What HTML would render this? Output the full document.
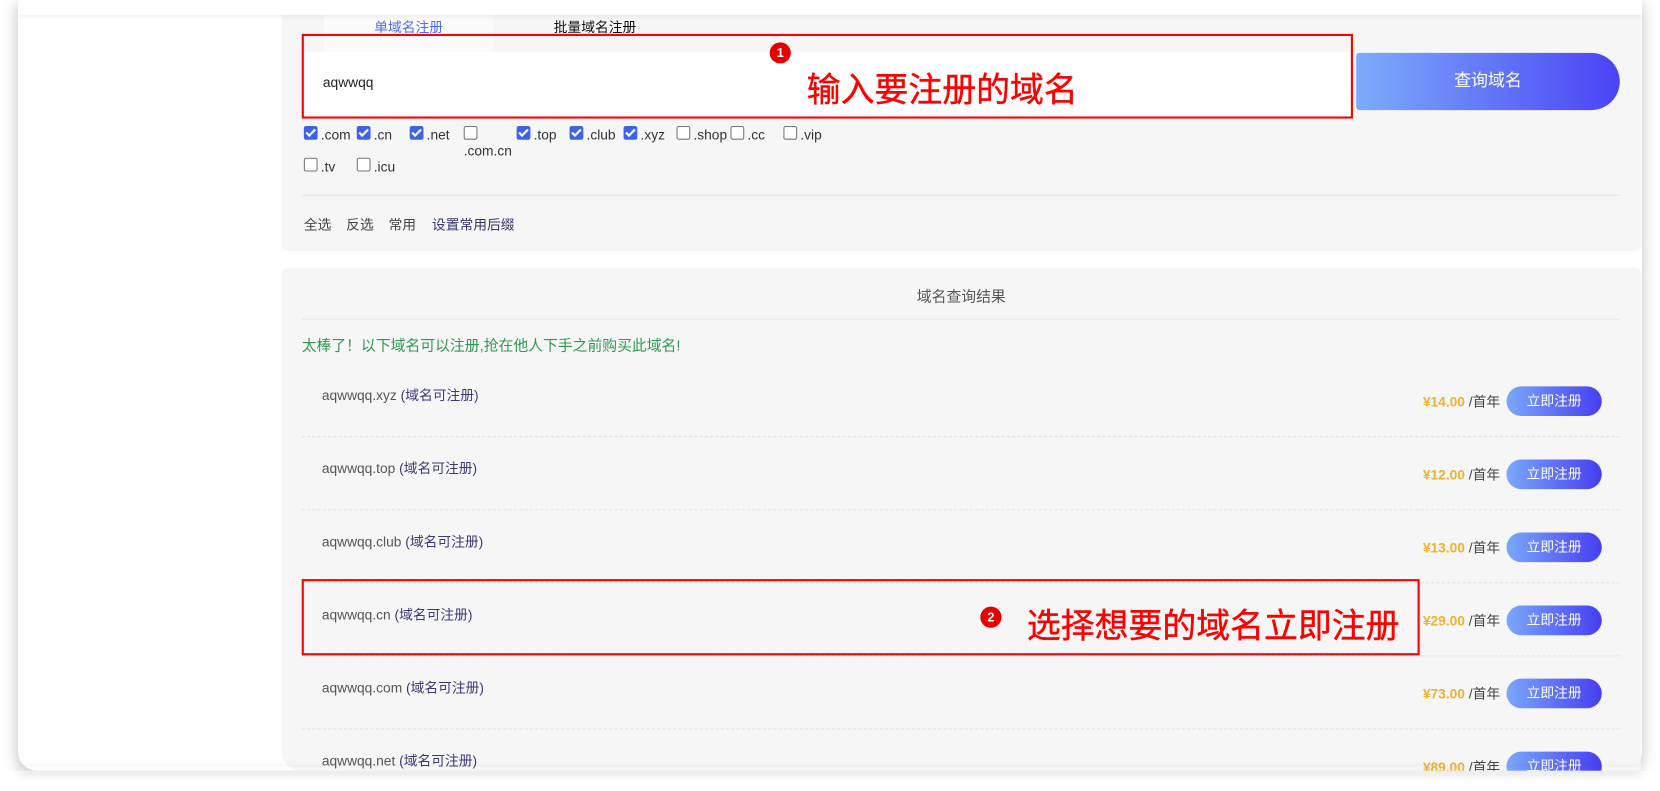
<!DOCTYPE html>
<html><head><meta charset="utf-8"><style>
html,body{margin:0;padding:0;width:1660px;height:791px;overflow:hidden;background:#fff;}
#s{position:absolute;left:0;top:0;width:1568px;height:747px;transform:scale(1.05867);transform-origin:0 0;font-family:"Liberation Sans","Noto Sans CJK SC",sans-serif;}
.a{position:absolute;white-space:nowrap;}
#win{position:absolute;left:17px;top:0;width:1534px;height:728px;background:#fff;border-radius:0 0 18px 18px;box-shadow:0 4px 14px rgba(0,0,0,.25);overflow:hidden;}
#topbar{position:absolute;left:0;top:0;width:1534px;height:14px;background:#fff;box-shadow:0 2px 4px rgba(0,0,0,.06);z-index:3;}
.p{position:absolute;background:#f6f6f6;}
.cb{position:absolute;width:11px;height:11px;border:1px solid #777;border-radius:2px;background:#fff;top:-1px;}
.cb.c{background:#3d63e8;border-color:#3d63e8;}
.cb.c:after{content:"";position:absolute;left:3px;top:0px;width:3px;height:7px;border:solid #fff;border-width:0 2px 2px 0;transform:rotate(45deg);}
.ck{position:absolute;font-size:13px;color:#333;top:120px;}
.ck span{margin-left:16px;}
.btn{position:absolute;left:1423px;width:90px;height:28px;border-radius:14px;background:linear-gradient(90deg,#7aa7fb,#463ef0);color:#fff;font-size:13px;text-align:center;line-height:28px;}
.dom{position:absolute;left:304px;font-size:13px;color:#555;}
.dom b{font-weight:normal;color:#3a3a78;}
.pr{position:absolute;right:calc(1568px - 1417px);font-size:13px;color:#444;}
.pr i{font-style:normal;color:#f0b030;font-weight:bold;}
.hr{position:absolute;left:285px;width:1245px;border-top:1px dashed #e2e2e2;}
.circ{position:absolute;width:20px;height:20px;border-radius:50%;background:#e60000;color:#fff;font-size:12px;font-weight:bold;text-align:center;line-height:20px;}
</style></head><body><div id="s">
<div id="win"><div id="topbar"></div></div>
<div class="p" style="left:266px;top:14px;width:1284px;height:223px;border-radius:0 0 6px 6px;"></div>
<div class="p" style="left:266px;top:253px;width:1284px;height:475px;border-radius:6px 6px 0 18px;"></div>
<div class="a" style="left:306px;top:14px;width:160px;height:35px;background:#fbfbfb;"></div>
<div class="a" style="left:306px;top:15px;width:160px;text-align:center;font-size:13px;color:#4e6ef2;">单域名注册</div>
<div class="a" style="left:482px;top:15px;width:160px;text-align:center;font-size:13px;color:#111;">批量域名注册</div>
<div class="a" style="left:287px;top:49px;width:989px;height:61px;background:#fff;"></div>
<div class="a" style="left:305px;top:70px;font-size:13px;color:#222;">aqwwqq</div>
<div class="a" style="left:285px;top:32px;width:989px;height:76px;border:2px solid #f00;"></div>
<div class="circ" style="left:727px;top:40px;">1</div>
<div class="a" style="left:762px;top:60px;font-size:32px;color:#f00;-webkit-text-stroke:0.4px #f00;">输入要注册的域名</div>
<div class="a" style="left:1281px;top:50px;width:249px;height:54px;border-radius:3px 27px 27px 3px;background:linear-gradient(90deg,#7cacfb,#4a43f5);color:#fff;font-size:16px;text-align:center;line-height:54px;">查询域名</div>

<div class="ck" style="left:287px;"><div class="cb c"></div><span>.com</span></div>
<div class="ck" style="left:337px;"><div class="cb c"></div><span>.cn</span></div>
<div class="ck" style="left:387px;"><div class="cb c"></div><span>.net</span></div>
<div class="ck" style="left:438px;"><div class="cb"></div></div>
<div class="a" style="left:438px;top:135px;font-size:13px;color:#333;">.com.cn</div>
<div class="ck" style="left:488px;"><div class="cb c"></div><span>.top</span></div>
<div class="ck" style="left:538px;"><div class="cb c"></div><span>.club</span></div>
<div class="ck" style="left:589px;"><div class="cb c"></div><span>.xyz</span></div>
<div class="ck" style="left:639px;"><div class="cb"></div><span>.shop</span></div>
<div class="ck" style="left:690px;"><div class="cb"></div><span>.cc</span></div>
<div class="ck" style="left:740px;"><div class="cb"></div><span>.vip</span></div>
<div class="ck" style="left:287px;top:150px;"><div class="cb"></div><span>.tv</span></div>
<div class="ck" style="left:337px;top:150px;"><div class="cb"></div><span>.icu</span></div>
<div class="a" style="left:285px;top:184px;width:1245px;border-top:1px solid #e6e6e6;"></div>
<div class="a" style="left:287px;top:202px;font-size:13px;color:#444;">全选</div>
<div class="a" style="left:327px;top:202px;font-size:13px;color:#444;">反选</div>
<div class="a" style="left:367px;top:202px;font-size:13px;color:#444;">常用</div>
<div class="a" style="left:408px;top:202px;font-size:13px;color:#33366a;">设置常用后缀</div>

<div class="a" style="left:266px;top:270px;width:1284px;text-align:center;font-size:14px;color:#555;">域名查询结果</div>
<div class="a" style="left:285px;top:301px;width:1245px;border-top:1px solid #e6e6e6;"></div>
<div class="a" style="left:285px;top:316px;font-size:14px;color:#2e9a4e;">太棒了！以下域名可以注册,抢在他人下手之前购买此域名!</div>

<div class="dom" style="top:363px;">aqwwqq.xyz <b>(域名可注册)</b></div>
<div class="pr" style="top:369px;"><i>¥14.00</i> /首年</div><div class="btn" style="top:365px;">立即注册</div>
<div class="hr" style="top:412px;"></div>
<div class="dom" style="top:432px;">aqwwqq.top <b>(域名可注册)</b></div>
<div class="pr" style="top:438px;"><i>¥12.00</i> /首年</div><div class="btn" style="top:434px;">立即注册</div>
<div class="hr" style="top:481px;"></div>
<div class="dom" style="top:501px;">aqwwqq.club <b>(域名可注册)</b></div>
<div class="pr" style="top:507px;"><i>¥13.00</i> /首年</div><div class="btn" style="top:503px;">立即注册</div>
<div class="hr" style="top:550px;"></div>
<div class="dom" style="top:570px;">aqwwqq.cn <b>(域名可注册)</b></div>
<div class="pr" style="top:576px;"><i>¥29.00</i> /首年</div><div class="btn" style="top:572px;">立即注册</div>
<div class="hr" style="top:619px;"></div>
<div class="dom" style="top:639px;">aqwwqq.com <b>(域名可注册)</b></div>
<div class="pr" style="top:645px;"><i>¥73.00</i> /首年</div><div class="btn" style="top:641px;">立即注册</div>
<div class="hr" style="top:688px;"></div>
<div class="dom" style="top:708px;">aqwwqq.net <b>(域名可注册)</b></div>
<div class="pr" style="top:714px;"><i>¥89.00</i> /首年</div><div class="btn" style="top:710px;">立即注册</div>

<div class="a" style="left:285px;top:547px;width:1052px;height:68px;border:2px solid #f00;"></div>
<div class="circ" style="left:926px;top:573px;">2</div>
<div class="a" style="left:970px;top:566px;font-size:32px;color:#f00;-webkit-text-stroke:0.4px #f00;">选择想要的域名立即注册</div>
<div class="a" style="left:0;top:728px;width:1568px;height:19px;background:#fff;"></div>
<div class="a" style="left:17px;top:724px;width:1534px;height:4px;border-radius:0 0 18px 18px;box-shadow:0 3px 8px rgba(0,0,0,.18);"></div>
</div></body></html>
